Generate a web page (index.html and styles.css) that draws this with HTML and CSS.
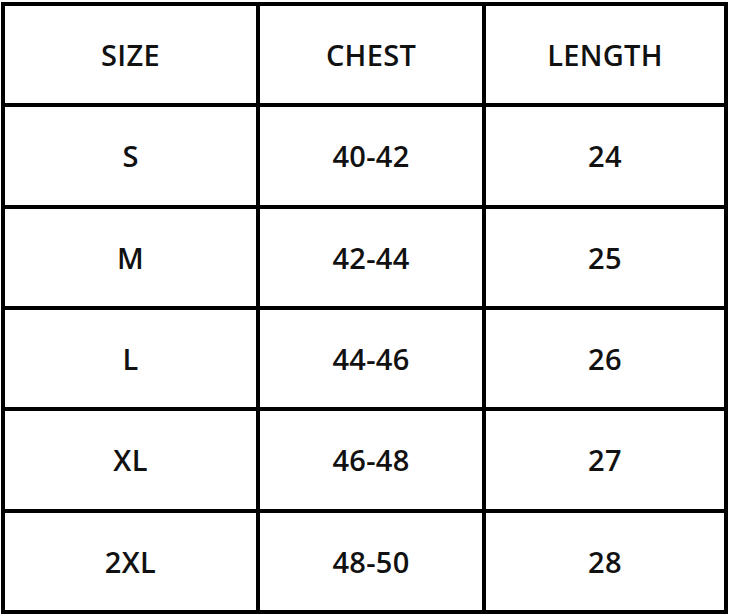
FILE: index.html
```html
<!DOCTYPE html>
<html>
<head>
<meta charset="utf-8">
<link rel="stylesheet" href="styles.css">
</head>
<body>
<div class="chart">
  <div class="cell">SIZE</div><div class="cell">CHEST</div><div class="cell">LENGTH</div>
  <div class="cell">S</div><div class="cell">40-42</div><div class="cell">24</div>
  <div class="cell">M</div><div class="cell">42-44</div><div class="cell">25</div>
  <div class="cell">L</div><div class="cell">44-46</div><div class="cell">26</div>
  <div class="cell">XL</div><div class="cell">46-48</div><div class="cell">27</div>
  <div class="cell">2XL</div><div class="cell">48-50</div><div class="cell">28</div>
</div>
</body>
</html>
```
FILE: styles.css
```css
html, body {
  margin: 0;
  padding: 0;
  background: #ffffff;
}
body {
  width: 733px;
  height: 614px;
  overflow: hidden;
}
.chart {
  margin: 2px 0 0 1px;
  width: 727px;
  height: 612px;
  box-sizing: border-box;
  background: #000000;
  padding: 4px;
  display: grid;
  grid-template-columns: 251px 222px 238px;
  grid-template-rows: repeat(6, 1fr);
  gap: 4px;
}
.cell {
  background: #ffffff;
  display: flex;
  align-items: center;
  justify-content: center;
  font-family: "Open Sans", sans-serif;
  font-weight: 600;
  font-size: 29px;
  letter-spacing: 0.3px;
  color: #111111;
}
```
